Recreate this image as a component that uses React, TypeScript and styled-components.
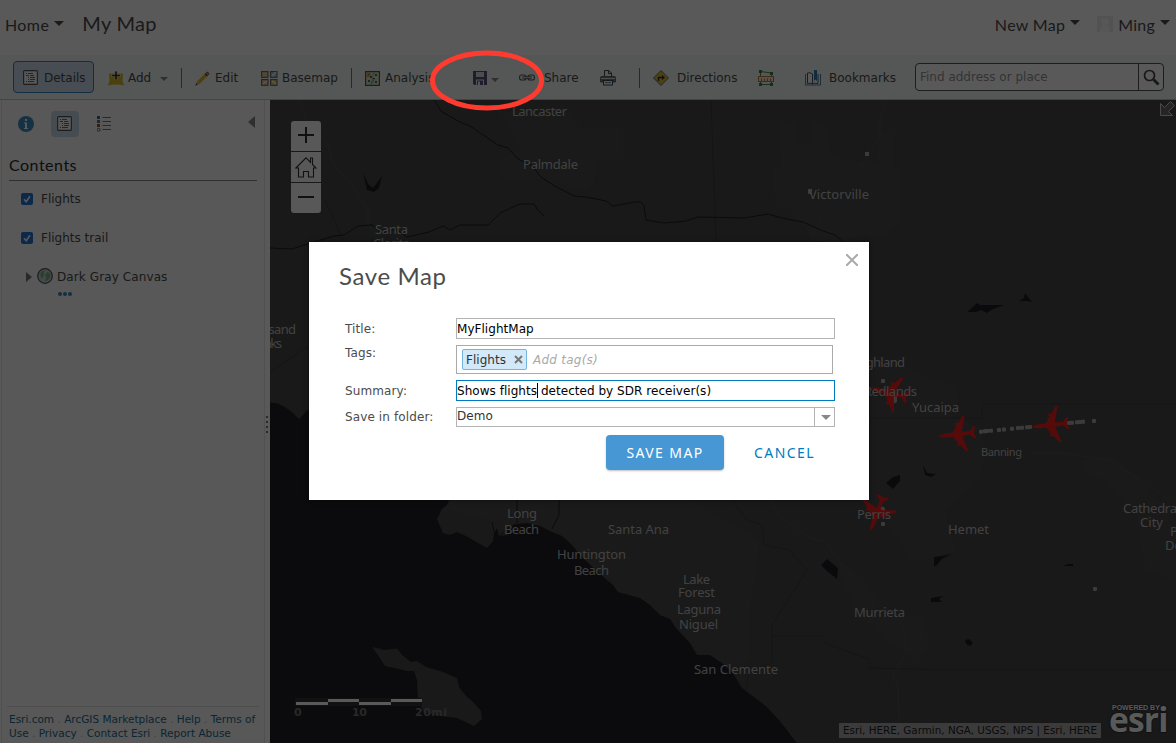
import React from "react";
import styled, { createGlobalStyle } from "styled-components";

const verdana = `"DejaVu Sans", Verdana, sans-serif`;
const avenir = `Lato, "Open Sans", sans-serif`;
const humanist = `"Noto Sans", "Open Sans", sans-serif`;

const Global = createGlobalStyle`
  * { box-sizing: border-box; }
  body { margin: 0; overflow: hidden; font-family: ${verdana}; font-size: 12px; color: #4c4c4c; background: #fff; }
`;

const Page = styled.div`
  position: relative;
  width: 1176px;
  height: 743px;
  display: flex;
  flex-direction: column;
  overflow: hidden;
`;

/* header */
const Header = styled.header`
  height: 55px;
  display: flex;
  align-items: center;
  padding: 0 6px 7px 5px;
  font-family: ${avenir};
  background: #fff;
`;
const HeaderLink = styled.span<{ $gap?: number; $ls?: number }>`
  display: flex;
  align-items: center;
  gap: 5px;
  margin-right: ${(p) => p.$gap ?? 0}px;
  font-size: 16px;
  letter-spacing: ${(p) => p.$ls ?? 0.4}px;
  white-space: nowrap;
`;
const MapTitle = styled.h1`
  margin: 0 auto 0 0;
  font-size: 20px;
  font-weight: 400;
  letter-spacing: 0.3px;
  padding-bottom: 2px;
`;
const Caret = styled.i<{ $w?: number; $c?: string; $up?: number; $left?: number; $top?: number }>`
  border: solid transparent;
  border-width: ${(p) => p.$w ?? 5}px ${(p) => p.$w ?? 5}px 0;
  border-top-color: ${(p) => p.$c ?? "#4c4c4c"};
  margin: ${(p) => p.$top ?? 0}px 0 ${(p) => p.$up ?? 0}px ${(p) => p.$left ?? 0}px;
`;

/* toolbar */
const Toolbar = styled.nav`
  height: 45px;
  display: flex;
  align-items: center;
  padding: 0 12px 0 13px;
  background: #f3f8f5;
  border-bottom: 1px solid #b9c6c4;
`;
const Tool = styled.span<{ $w: number; $gap?: number; $pad?: number }>`
  width: ${(p) => p.$w}px;
  padding: 2px 0 0 ${(p) => p.$pad ?? 0}px;
  display: flex;
  align-items: center;
  flex: none;
  gap: ${(p) => p.$gap ?? 5}px;
  color: #4c4c4c;
  white-space: nowrap;
  svg { flex: none; }
`;
const DetailsTool = styled(Tool)`
  height: 32px;
  padding: 1px 0 0 9px;
  border: 1px solid #2f86bd;
  border-radius: 4px;
  background: #cadded;
`;
const Separator = styled.i`
  width: 1px;
  height: 20px;
  margin: 2px 13px 0 0;
  background: #777;
`;
const Search = styled.div`
  margin-left: auto;
  width: 249px;
  height: 28px;
  display: flex;
  border: 1px solid #555;
  border-radius: 4px;
  background: #fff;
  align-items: center;
`;
const SearchText = styled.span`
  flex: 1;
  height: 100%;
  padding: 6px 4px;
  color: #949494;
  border-right: 1px solid #555;
`;
const SearchButton = styled.span`
  width: 24px;
  display: flex;
  justify-content: center;
`;

/* body */
const Body = styled.div`
  flex: 1;
  min-height: 0;
  display: flex;
`;
const Side = styled.aside`
  width: 264px;
  margin-left: 1px;
  display: flex;
  flex-direction: column;
  background: #fbfbfb;
  border: solid #e4e4e4;
  border-width: 0 1px;
`;
const Splitter = styled.div`
  width: 5px;
  padding: 5px 0 0 1px;
  display: flex;
  flex-direction: column;
  justify-content: center;
  gap: 3px;
  i { width: 2px; height: 2px; background: #777; }
`;
const SideTabs = styled.div`
  height: 47px;
  display: flex;
  align-items: center;
  padding-left: 16px;
`;
const Tab = styled.span<{ $on?: boolean }>`
  width: 28px;
  height: 26px;
  margin-right: 11px;
  border-radius: 4px;
  display: flex;
  align-items: center;
  justify-content: center;
  padding-right: 1px;
  background: ${(p) => (p.$on ? "#c9dceb" : "none")};
  &:first-child { width: 16px; margin-right: 17px; padding: 0; }
`;
const Collapse = styled.i`
  margin: 0 9px 3px auto;
  border: solid transparent;
  border-width: 6px 7px 6px 0;
  border-right-color: #888;
`;
const SideTitle = styled.h2`
  margin: 7px 7px 0 7px;
  height: 27px;
  font: 400 16px/22px ${avenir};
  letter-spacing: 0.5px;
  color: #2a2a2a;
  border-bottom: 1px solid #888;
`;
const Layer = styled.div`
  height: 39px;
  padding: 0 0 3px 19px;
  display: flex;
  align-items: center;
  gap: 8px;
`;
const Check = styled.span`
  width: 12px;
  height: 12px;
  border-radius: 2px;
  background: #2372d6;
  display: flex;
`;
const BaseLayer = styled.div`
  height: 38px;
  padding: 0 0 2px 24px;
  display: flex;
  align-items: center;
  gap: 4px;
  letter-spacing: 0.1px;
  svg { margin: 0 0 3px 1px; }
`;
const Arrow = styled.i`
  border: solid transparent;
  border-width: 5px 0 5px 6px;
  border-left-color: #777;
`;
const Dots = styled.div`
  display: flex;
  gap: 1px;
  margin: -5px 0 0 56px;
  i { width: 4px; height: 4px; border-radius: 50%; background: #3a86bd; }
`;
const Footer = styled.footer`
  margin: auto 5px 0;
  padding: 5px 2px 3px;
  border-top: 1px solid #ddd;
  color: #bbb;
  font-size: 10.5px;
  line-height: 14px;
  white-space: nowrap;
  a { color: #1d6d90; }
`;

/* map */
const MapPane = styled.main`
  position: relative;
  flex: 1;
  background: #484848;
`;
const MapArt = styled.svg`
  display: block;
  text { font-family: ${humanist}; font-size: 13px; fill: #bcbcbc; }
`;
const ScaleText = styled.text`
  && { font: 700 11px ${verdana}; fill: #737373; }
`;
const Zoomer = styled.div`
  position: absolute;
  left: 21px;
  top: 21px;
  width: 30px;
  display: flex;
  flex-direction: column;
  gap: 1px;
  border-radius: 3px;
  overflow: hidden;
  span { height: 30px; display: flex; align-items: center; justify-content: center; background: #fbfbfb; }
  span:first-child { padding-bottom: 2px; }
  span:last-child { padding-bottom: 2px; }
`;
const Attribution = styled.div`
  position: absolute;
  left: 569px;
  top: 623px;
  width: 262px;
  height: 15px;
  padding-left: 4px;
  font-size: 10.37px;
  line-height: 15px;
  white-space: nowrap;
  background: #a9a9a9;
  color: #222;
`;
const Esri = styled.div`
  position: absolute;
  right: 7px;
  bottom: 1px;
  width: 60px;
  height: 39px;
  color: #fff;
  text-shadow: 0 0 2px #000;
`;
const Powered = styled.div`
  padding: 1px 0 0 3px;
  font: 700 7px/8px "Liberation Sans", Arial, sans-serif;
  white-space: nowrap;
`;
const EsriWord = styled.div`
  margin-top: -11px;
  font: 700 33.5px/37px "Open Sans", sans-serif;
  letter-spacing: -0.8px;
`;

/* overlay */
const Shade = styled.div`
  position: absolute;
  inset: 0;
  background: rgba(0, 0, 0, 0.65);
`;
const Mark = styled.svg`
  position: absolute;
  left: 428px;
  top: 48px;
`;
const Dialog = styled.section`
  position: absolute;
  left: 309px;
  top: 242px;
  width: 560px;
  height: 258px;
  padding: 18px 34px 0 30px;
  background: #fff;
  box-shadow: 0 0 4px rgba(0, 0, 0, 0.5);
`;
const Close = styled.svg`
  position: absolute;
  right: 11px;
  top: 12px;
`;
const DialogTitle = styled.h2`
  margin: 0;
  height: 58px;
  font: 400 24px/32px ${avenir};
  letter-spacing: 0.6px;
`;
const Row = styled.div<{ $h: number; $mb: number }>`
  display: grid;
  grid-template: 100% / 111px 379px;
  height: ${(p) => p.$h}px;
  margin: 0 0 ${(p) => p.$mb}px 6px;
`;
const Label = styled.label<{ $lh?: number }>`
  line-height: ${(p) => p.$lh ?? 23}px;
  letter-spacing: 0.12px;
`;
const Field = styled.div<{ $focus?: boolean }>`
  display: flex;
  align-items: center;
  color: #000;
  border: 1px solid ${(p) => (p.$focus ? "#007ac2" : "#b3b3b3")};
  letter-spacing: 0.04px;
  white-space: pre;
`;
const Cursor = styled.i`
  width: 1px;
  height: 15px;
  margin-right: -1px;
  background: #000;
`;
const TagField = styled(Field)`
  width: 377px;
  padding-left: 5px;
  gap: 6px;
  border-color: #aaa;
`;
const Tag = styled.span`
  width: 65px;
  height: 21px;
  padding: 0 3px;
  display: flex;
  align-items: center;
  justify-content: space-between;
  color: #323232;
  background: #d2e9f9;
  border: 1px solid #74b6e0;
  border-radius: 2px;
`;
const Hint = styled.em`
  color: #a9a9a9;
  letter-spacing: 0.25px;
`;
const Select = styled(Field)`
  color: #333;
  justify-content: space-between;
`;
const Value = styled.span`
  padding-bottom: 2px;
`;
const Drop = styled.span`
  width: 20px;
  height: 18px;
  padding-left: 3px;
  display: flex;
  align-items: center;
  justify-content: center;
  border-left: 1px solid #b3b3b3;
`;
const Actions = styled.div`
  display: flex;
  margin-left: 267px;
  font: 400 14px/35px ${humanist};
  letter-spacing: 1.4px;
`;
const Save = styled.button`
  flex: none;
  width: 118px;
  height: 35px;
  padding: 0;
  border: 0;
  border-radius: 4px;
  font: inherit;
  letter-spacing: inherit;
  color: #fff;
  background: #4797d4;
  box-shadow: 0 1px 2px rgba(0, 0, 0, 0.25);
`;
const Cancel = styled(Save)`
  width: 121px;
  color: #007ac2;
  background: none;
  box-shadow: none;
`;

const ListIcon = () => (
  <svg width="15" height="15" viewBox="0 0 15 15" fill="none">
    <rect x="0.6" y="0.6" width="13.8" height="13.8" rx="1" fill="#f7f9fb" stroke="#555" strokeWidth="1.1" />
    <path d="M3 3.5h1M5 3.5h5M3 5.5h3M7 5.5h4M5 7.5h1M7 7.5h5M5 9.5h1M7 9.5h5M3 11.5h1M5 11.5h6" stroke="#2b82b8" />
  </svg>
);
const AddIcon = () => (
  <svg width="16" height="15" viewBox="0 0 16 15">
    <path d="M1 2.5h14L14.500 10l1.500 4.500Q8 12.500 0 14.500L1.500 10z" fill="#d8b928" />
    <path d="M8 0v9M3.500 4.500h9" stroke="#f3e9a8" strokeWidth="3" />
    <path d="M8 .5v8M4 4.500h8" stroke="#333" strokeWidth="1.7" />
  </svg>
);
const PencilIcon = () => (
  <svg width="15" height="15" viewBox="0 0 15 15">
    <path d="M2.200 10.200 10 2.500l2.500 2.500-7.700 7.800z" fill="#e0b62d" />
    <path d="M2.200 10.200.4 14.600l4.400-1.800z" fill="#c9a77c" />
    <path d="m.4 14.600.8-2 1.300 1.200z" fill="#222" />
    <path d="m9.600 2.900 1-1L13 4.400l-1 1z" fill="#444" />
    <path d="m10.800 1.700.9-.9c1-.8 3.300 1.600 2.500 2.600l-1 .9z" fill="#b0655a" />
  </svg>
);
const BasemapIcon = () => (
  <svg width="17" height="15" viewBox="0 0 17 15" stroke="#666" strokeWidth="1.1">
    <rect x=".6" y=".6" width="6.4" height="5.7" fill="#e5cf91" />
    <rect x="9.6" y=".6" width="6.4" height="5.7" fill="#a9cde2" />
    <rect x=".6" y="8.6" width="6.4" height="5.7" fill="#efc19b" />
    <rect x="9.6" y="8.6" width="6.4" height="5.7" fill="#e0cd6d" />
    <path d="m11 5 4-4M2 13l4-3M11 10l4 3" stroke="#fff" />
  </svg>
);
const AnalysisIcon = () => (
  <svg width="15" height="15" viewBox="0 0 15 15">
    <rect x=".6" y=".6" width="13.8" height="13.8" fill="#e0e3be" stroke="#555" strokeWidth="1.2" />
    <path d="M1.500 1.500h5L5 6H1.500z" fill="#e39a50" />
    <path d="m8 1.500 2 0-2 4 2 3-3 5H5l2-5z" fill="#7fb5c9" />
    <path d="M3 9h2v2H3zM10 3h2v2h-2zM10 10h2v2h-2zM5 5h2v2H5zM8 7h2v1H8zM3 3h1v1H3z" fill="#47734a" />
  </svg>
);
const SaveIcon = () => (
  <svg width="14" height="14" viewBox="0 0 14 14">
    <path d="M0 0h14v14H1.500L0 12.500z" fill="#5c527f" />
    <path d="M3 1h8v5H3z" fill="#d9dce3" />
    <path d="M3 8.500h8V14H3z" fill="#f0f2f3" />
    <path d="M4 9.500h6V14H4z" fill="#5c527f" />
    <path d="M5 10.500h2V14H5z" fill="#f0f2f3" />
  </svg>
);
const LinkIcon = () => (
  <svg width="16" height="8" viewBox="0 0 16 8" fill="none" stroke="#555" strokeWidth="1.1">
    <rect x=".6" y="1" width="6.5" height="5" rx="2" />
    <rect x="8.9" y="1" width="6.5" height="5" rx="2" />
    <path d="M3.500 3.500h9" strokeWidth="2.4" />
    <path d="M4 3.500h8" stroke="#f3f8f5" strokeWidth=".7" />
  </svg>
);
const PrintIcon = () => (
  <svg width="16" height="16" viewBox="0 0 16 16" fill="none" stroke="#444">
    <path d="M4.500 7V.500h4.500L11.500 3v4M8.500.500V3.500h3" />
    <path d="M.500 12V7.500Q.500 6.500 1.500 6.500h13q1 0 1 1V12z" fill="#777" stroke="#666" />
    <path d="M1 8.500h14" stroke="#ddd" />
    <rect x="3.5" y="10.5" width="9" height="4.5" fill="#f5f7f6" />
    <path d="M5 12.500h6" stroke="#4a86b4" />
  </svg>
);
const DirectionsIcon = () => (
  <svg width="16" height="16" viewBox="0 0 16 16">
    <path d="M8 .5 15.500 8 8 15.500.5 8z" fill="#d9b932" stroke="#666" />
    <path d="M5.500 11V7.500h4" fill="none" stroke="#333" strokeWidth="1.4" />
    <path d="m9 5 3 2.500L9 10z" fill="#333" />
  </svg>
);
const MeasureIcon = () => (
  <svg width="16" height="16" viewBox="0 0 16 16" fill="none">
    <path d="M2.500 1.500 13.500 3M2.500 14.500h11M2.500 1.500v5M13.500 3v4M2.500 11v3M13.500 11v3" stroke="#4a8750" />
    <path d="M1 0h3v3H1zM12 2h3v3h-3zM1 13h3v3H1zM12 13h3v3h-3z" fill="#3b8043" />
    <rect x=".5" y="6.5" width="15" height="5" fill="#f5ead8" stroke="#c57a3a" />
    <path d="M3.500 8.500v3M6.500 8.500v3M9.500 8.500v3M12.500 8.500v3" stroke="#c57a3a" />
  </svg>
);
const BookIcon = () => (
  <svg width="16" height="16" viewBox="0 0 16 16" fill="none" stroke="#555">
    <path d="M.5 4v11h15V4" stroke="#4a86ad" />
    <path d="M7.500 14V4Q5 2 2.500 3v10.500Q5.500 12.500 7.500 14q2-1.500 5.500-.5V4" fill="#fff" />
    <path d="M9 0h3v11l-1.500-1.500L9 11z" fill="#2b82b8" stroke="none" />
  </svg>
);
const GlassIcon = () => (
  <svg width="17" height="17" viewBox="0 0 17 17" fill="none" stroke="#444">
    <circle cx="6.5" cy="6.5" r="5" strokeWidth="1.7" />
    <path d="m10.500 10.500 5 5" strokeWidth="2.8" />
  </svg>
);
const InfoIcon = () => (
  <svg width="16" height="16" viewBox="0 0 16 16">
    <circle cx="8" cy="8" r="8" fill="#3a8fc0" />
    <path d="M7 3h2v2H7zM6 6.500h3V12h1v1H6v-1h1V7.500H6z" fill="#fff" />
  </svg>
);
const LegendIcon = () => (
  <svg width="14" height="16" viewBox="0 0 14 16">
    <path d="M5.500 1.500H14M5.500 5.500H14M5.500 9.500H14M5.500 13.500H14" stroke="#3b87b5" />
    <path d="M0 0h3v3H0z" fill="#2d6d9e" />
    <path d="M0 4h3v3H0z" fill="#4b8b4d" />
    <path d="M0 8h3v3H0z" fill="#b44a2c" />
    <circle cx="1.6" cy="13.8" r="1.5" fill="none" stroke="#74599b" />
  </svg>
);
const GlobeIcon = () => (
  <svg width="16" height="16" viewBox="0 0 16 16">
    <circle cx="8" cy="8" r="7.3" fill="#c4d4db" stroke="#555" strokeWidth="1.2" />
    <path d="M3.500 4.500q2-2 4-2l-1 2.500 1 2L6 9l-1 2-1.500-3zM10 4l3 1 .5 4-3 3.500-2.500.5 1-3.500-1-2z" fill="#7fb184" />
  </svg>
);
const HomeIcon = () => (
  <svg width="22" height="21" viewBox="0 0 22 21" fill="none" stroke="#333" strokeWidth="1.1">
    <path d="M3.500 11v9h5v-5.500h5V20h5v-9h2.500L17.500 7.500V1h-2v4.500L11 .9.900 11z" />
  </svg>
);

const Plane = ({ x, y, r }: { x: number; y: number; r: number }) => (
  <path
    transform={`translate(${x} ${y}) rotate(${r})`}
    fill="#f52020"
    d="M-19 0Q-16-1.800-12-2L-4.500-2.300 0-9-1.500-9.500v-2L2-11 6.800-17.800H9L4.500-2.200 12.500-1.600 16.500-6H18.500L16.500 0 18.500 6H16.500L12.500 1.600 4.500 2.200 9 17.800H6.800L2 11-1.500 11.500v-2L0 9-4.500 2.300-12 2Q-16 1.800-19 0z"
  />
);

type LabelSpec = [string, number, number, number];
const places: LabelSpec[] = [
  ["Lancaster", 512, 116, 55],
  ["Palmdale", 523, 169, 55],
  ["Victorville", 809, 199, 60],
  ["Santa", 375, 234, 33],
  ["Clarita", 373, 248, 37],
  ["Thousand", 240, 334, 56],
  ["Oaks", 256, 348, 26],
  ["Highland", 854, 367, 51],
  ["Redlands", 864, 396, 53],
  ["Yucaipa", 912, 412, 47],
  ["Perris", 857, 519, 34],
  ["Hemet", 948, 534, 41],
  ["Cathedral", 1123, 513, 57],
  ["City", 1140, 527, 23],
  ["Palm", 1170, 536, 29],
  ["Desert", 1165, 550, 40],
  ["Murrieta", 854, 617, 51],
  ["Long", 507, 518, 30],
  ["Beach", 504, 534, 35],
  ["Santa Ana", 608, 534, 61],
  ["Huntington", 557, 559, 69],
  ["Beach", 574, 575, 35],
  ["Lake", 683, 584, 27],
  ["Forest", 678, 597, 37],
  ["Laguna", 677, 614, 44],
  ["Niguel", 679, 629, 39],
  ["San Clemente", 694, 674, 84],
];
const track = [981, 985, 987, 991, 999, 1004, 1012, 1018, 1022, 1027, 1030, 1069, 1072, 1077, 1080, 1083];

const MapDrawing = () => (
  <MapArt width="906" height="643" viewBox="270 100 906 643">
    <g fill="#4b4b4b">
      <path d="M500 112h70l10 16h43v31h-25l-5 25-10 8-20-8-25-5-20 3-22-8 5-14 20-10z" />
      <path d="M778 122h18l2 20 14 4 0-22h14l5 30 12 6 35 2v-28h16v34h6v50l-6 10-10 10-20-5-20 10-30-2-12-18-20-20-8-6v-28h8z" />
      <path d="M450 500h240l70 40-10 70 0 50-30 10-40-30-30-30-50-30-50-50-60-10-40-10z" />
      <path d="M868 350l22 10 30 15 38 10v32l18 10 10 20-5 25-16 20-20 20 10 40-40 10-30-40-17-30z" />
      <path d="M840 560l25 20 15 30 40 5 10 30-15 15-10-10-15-5-30-30-20-40z" />
      <path d="M1080 460l30-5 20 15 46 50v60l-30-10-10-60-30-30-20-5z" />
    </g>
    <g fill="none" stroke="#525252">
      <path d="M300 100l7 22 20 20 6 22 18 20 17 25 0 15 8 12M886 100l-6 20v15l-20 35-20 15-15 25-15 30" />
      <path d="M770 500l12 18 28 20 15 4 15 20 20 28 40 30 6 20 0 12-13 22 5 15v12l3 40M1030 453l35 0 45 8 40 25 26 20M767 707l15 16 16 20M570 515l60 45 40 20" />
    </g>
    <g fill="none" stroke="#3c3c3c">
      <path d="M711 100l5 142M870 418h112v-14h194M732 500l15 20 15 5 2 20 25 5 18 20-35 55v38l-23 10-6 30M773 636h51v7l45 16v9l80 2h227M325 200l18 40M270 372l38-26" />
    </g>
    <g fill="none" stroke="#202020">
      <path d="M434 100l8 12 20 11 8 3 28 19 10 3 10 11 14 7 9 11 12 8 21 11 12 1 20 4 7 5 22-4 6 0 3 4 2 14 18 3 22-2 12-4 46 1 24-4 14 4 21 4 20 9 12 4 15 13 2 5M270 248l22 1 22-7 20-6 10-1 14-9 14-1 10 8 14-4 11 8 22-5 14-6 7 4 10-5h28l12-12 20-9h14l4 6 6 6" />
      <path d="M492 522l4 18 8-8M517 500v23M559 500v15l-7 14" />
    </g>
    <path
      fill="#212125"
      d="M270 402.500 278 403.500 285 407 293 413 299 419 303 415 307 410 330 420 380 440 430 470 449 500 447 505 442 509 437 519 443 533 450 535 457 532 466 536 487 548 493 541 494 534 497 528 499 536 508 535 505 529 515 524 528 523 540 526 552 532 562 536 570 543 583 558 600 574 613 585 618 592 640 598 650 605 660 615 670 619 676 628 690 643 697 655 710 655 722 663 733 673 742 688 767 707 780 721 797 743H270z"
    />
    <path
      fill="#484848"
      d="M372 647 384 650 397 648.500 402 655 411 662 417 661 426 667 443 672 457 678 459 687 466 696 474 703 481 711 482 719 474 726 457 718 440 716 424 712 418 700 417 680 414 671 407 671 395 668 385 666 380 658z"
    />
    <g fill="#1f1f24">
      <path d="M363 172l5 12 5 4 9-12-3 12-5 4-7-2zM967 312l6-5 4-4 3 2 11 0 13 0-11 4-6 4-6-3-5 2zM1019 301l5-3 1-5 7 9-5-1z" />
      <path d="M886 483l7-6 7-2v6l-7 8zM923 465l4 8 9 1-5 3-6-2zM821 565l6-6 11 9-1 11-9-7zM934 557l8-1 9-2-9 5-6 7h-2zM931 598l12-2-4 3 3 3-11 0zM965 640l4-1 4 4-3 3-4-2zM1063 566l5-2h5v2z" />
    </g>
    <g fill="#aaa">
      {track.map((x) => (
        <rect key={x} x={x - 2} y={431.7 - (x - 981) * 0.098 - 2} width="4" height="4" rx="1" />
      ))}
      <rect x="1092" y="419" width="4" height="4" rx="1" />
      <rect x="1093" y="587" width="4" height="4" rx="1" />
      <rect x="865" y="152" width="4" height="4" />
      <rect x="808" y="189" width="4" height="5" />
      <rect x="881" y="379" width="4" height="4" rx="1" />
      <rect x="881" y="522" width="4" height="4" rx="1" />
      <path d="M890 396l7 0 0 6-4 2-3-4zM878 506l6 1 2 5-5-2z" />
    </g>
    <Plane x={957.5} y={434.2} r={-6} />
    <Plane x={1050.5} y={425} r={-6} />
    <Plane x={890} y={393} r={15} />
    <Plane x={877} y={513} r={-70} />
    {places.map(([name, x, y, w]) => (
      <text key={name + y} x={x} y={y} textLength={w}>
        {name}
      </text>
    ))}
    <text x="981" y="456" textLength="41" style={{ fontSize: 11 }}>
      Banning
    </text>
    <path d="M295 698h127v8H295z" fill="#333" />
    <path d="M296 702h32v3h-32zM328 699h31v3h-31zM359 702h32v3h-32zM391 699h31v3h-31z" fill="#fff" />
    <ScaleText x="294" y="716">0</ScaleText>
    <ScaleText x="352" y="716" textLength="15">10</ScaleText>
    <ScaleText x="415" y="716" textLength="32">20mi</ScaleText>
    <path
      d="M1160.500 103.500V115.500H1172.500L1168.500 111.500 1174.500 105.500 1170.500 101.500 1164.500 107.500z"
      stroke="#d5d5d5"
      fill="#6c6c6c"
    />
  </MapArt>
);

export default function App() {
  return (
    <Page>
      <Global />
      <Header>
        <HeaderLink $gap={18}>Home <Caret $up={1} /></HeaderLink>
        <MapTitle>My Map</MapTitle>
        <HeaderLink $gap={17} $ls={0.3}>New Map <Caret $up={3} /></HeaderLink>
        <HeaderLink $ls={0.25}>
          <svg width="16" height="16" viewBox="0 0 16 16">
            <path d="M0 0h16v16H0z" fill="#ececec" />
            <path d="M8 2.500a3 3 0 0 1 1.500 6q3.500 1 3.500 7.500H3q0-6.500 3.500-7.500a3 3 0 0 1 1.500-6z" fill="#f8f8f8" />
          </svg>
          Ming <Caret $up={3} />
        </HeaderLink>
      </Header>
      <Toolbar>
        <DetailsTool $w={81} $gap={6}><ListIcon />Details</DetailsTool>
        <Tool $w={87} $pad={14} $gap={4}><AddIcon />Add <Caret $w={4} $c="#888" $left={5} $top={2} /></Tool>
        <Separator />
        <Tool $w={66} $gap={5}><PencilIcon />Edit</Tool>
        <Tool $w={90} $gap={4}><BasemapIcon />Basemap</Tool>
        <Separator />
        <Tool $w={108} $gap={5}><AnalysisIcon />Analysis</Tool>
        <Tool $w={46} $gap={4}><SaveIcon /><Caret $w={4} $c="#888" $top={3} /></Tool>
        <Tool $w={81} $gap={9}><LinkIcon />Share</Tool>
        <Tool $w={39}><PrintIcon /></Tool>
        <Separator />
        <Tool $w={105} $gap={8}><DirectionsIcon />Directions</Tool>
        <Tool $w={47}><MeasureIcon /></Tool>
        <Tool $w={100} $gap={8}><BookIcon />Bookmarks</Tool>
        <Search>
          <SearchText>Find address or place</SearchText>
          <SearchButton><GlassIcon /></SearchButton>
        </Search>
      </Toolbar>
      <Body>
        <Side>
          <SideTabs>
            <Tab><InfoIcon /></Tab>
            <Tab $on><ListIcon /></Tab>
            <Tab><LegendIcon /></Tab>
            <Collapse />
          </SideTabs>
          <SideTitle>Contents</SideTitle>
          {["Flights", "Flights trail"].map((name) => (
            <Layer key={name}>
              <Check>
                <svg width="12" height="12" viewBox="0 0 12 12" fill="none" stroke="#fff" strokeWidth="1.6">
                  <path d="m3 6.300 2.200 2.400L9 3.300" />
                </svg>
              </Check>
              {name}
            </Layer>
          ))}
          <BaseLayer><Arrow /><GlobeIcon />Dark Gray Canvas</BaseLayer>
          <Dots><i /><i /><i /></Dots>
          <Footer>
            <div><a>Esri.com</a> . <a>ArcGIS Marketplace</a> . <a>Help</a> . <a>Terms of</a></div>
            <div><a>Use</a> . <a>Privacy</a> . <a>Contact Esri</a> . <a>Report Abuse</a></div>
          </Footer>
        </Side>
        <Splitter><i /><i /><i /><i /></Splitter>
        <MapPane>
          <MapDrawing />
          <Zoomer>
            <span><svg width="16" height="16" stroke="#333" strokeWidth="2"><path d="M8 0v16M0 8h16" /></svg></span>
            <span><HomeIcon /></span>
            <span><svg width="16" height="16" stroke="#333" strokeWidth="2"><path d="M0 8h16" /></svg></span>
          </Zoomer>
          <Attribution>Esri, HERE, Garmin, NGA, USGS, NPS | Esri, HERE</Attribution>
          <Esri>
            <Powered>POWERED BY</Powered>
            <EsriWord>esri</EsriWord>
          </Esri>
        </MapPane>
      </Body>
      <Shade />
      <Mark width="118" height="66" fill="none">
        <ellipse cx="59" cy="32.5" rx="54.5" ry="27.5" stroke="#ff3b30" strokeWidth="5" />
      </Mark>
      <Dialog>
        <Close width="12" height="12" stroke="#aaa" strokeWidth="2"><path d="M0 0l12 12M12 0 0 12" /></Close>
        <DialogTitle>Save Map</DialogTitle>
        <Row $h={21} $mb={6}>
          <Label>Title:</Label>
          <Field>MyFlightMap</Field>
        </Row>
        <Row $h={29} $mb={6}>
          <Label $lh={16}>Tags:</Label>
          <TagField>
            <Tag>
              Flights
              <svg width="9" height="9" stroke="#777" strokeWidth="2"><path d="M1 1l7 7M8 1 1 8" /></svg>
            </Tag>
            <Hint>Add tag(s)</Hint>
          </TagField>
        </Row>
        <Row $h={21} $mb={6}>
          <Label>Summary:</Label>
          <Field $focus>Shows flights<Cursor /> detected by SDR receiver(s)</Field>
        </Row>
        <Row $h={20} $mb={8}>
          <Label $lh={20}>Save in folder:</Label>
          <Select><Value>Demo</Value><Drop><Caret $c="#888" /></Drop></Select>
        </Row>
        <Actions>
          <Save>SAVE MAP</Save>
          <Cancel>CANCEL</Cancel>
        </Actions>
      </Dialog>
    </Page>
  );
}
